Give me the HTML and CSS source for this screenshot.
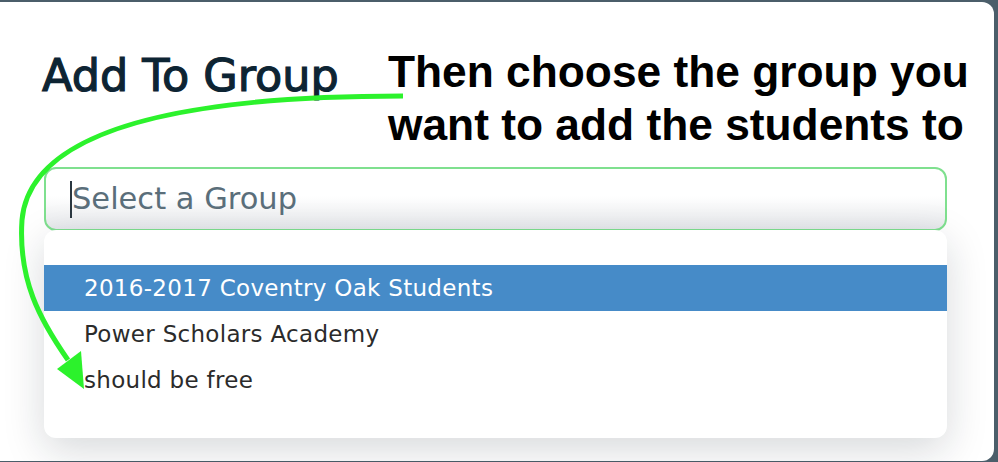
FILE: index.html
```html
<!DOCTYPE html>
<html>
<head>
<meta charset="utf-8">
<link rel="stylesheet" href="styles.css">
</head>
<body>
<div class="modal">
  <h1 class="title">Add To Group</h1>
  <div class="select">
    <span class="caret"></span><span class="placeholder">Select a Group</span>
  </div>
  <ul class="menu">
    <li class="item active">2016-2017 Coventry Oak Students</li>
    <li class="item">Power Scholars Academy</li>
    <li class="item">should be free</li>
  </ul>
</div>
<div class="note">Then choose the group you<br>want to add the students to</div>
<svg class="arrow" width="998" height="462" viewBox="0 0 998 462">
  <path d="M403 96 C 180 96, 30 130, 22 220 C 18 280, 40 320, 68 360" fill="none" stroke="#2cf22c" stroke-width="5" stroke-linecap="butt"/>
  <polygon points="57,369 81,351 84,389" fill="#2cf22c"/>
</svg>
</body>
</html>
```
FILE: styles.css
```css
html, body {
  margin: 0;
  padding: 0;
}
body {
  background: #4b5e6a;
  width: 998px;
  height: 462px;
  overflow: hidden;
  position: relative;
  font-family: "DejaVu Sans", "Open Sans", sans-serif;
}
.modal {
  margin: 2px 0 0 -20px;
  width: 1014px;
  height: 459px;
  background: #fff;
  border-radius: 12px;
  box-sizing: border-box;
  padding: 49px 0 0 64px;
}
.title {
  margin: 0 0 0 -2px;
  font-size: 44.5px;
  line-height: 50px;
  font-weight: 400;
  -webkit-text-stroke: 1.2px #0d2433;
  color: #0d2433;
}
.select {
  margin-top: 66px;
  width: 903px;
  height: 64px;
  box-sizing: border-box;
  border: 2px solid #7fe08f;
  border-radius: 12px;
  background: linear-gradient(#ffffff 45%, #e7e9ec);
  display: flex;
  align-items: center;
  padding-left: 24px;
}
.caret {
  width: 2px;
  height: 37px;
  background: #2a3740;
}
.placeholder {
  font-size: 30.5px;
  color: #5a6e7a;
  line-height: 40px;
}
.menu {
  list-style: none;
  margin: -1px 0 0 0;
  padding: 35px 0;
  width: 903px;
  box-sizing: border-box;
  background: #fff;
  border-radius: 12px;
  box-shadow: 0 12px 40px rgba(20, 30, 40, 0.17);
}
.item {
  height: 46px;
  line-height: 46px;
  padding-left: 40px;
  font-size: 23px;
  letter-spacing: 0.3px;
  color: #2b2b2b;
}
.item.active {
  background: #468bc8;
  color: #fff;
}
.note {
  position: absolute;
  left: 388px;
  top: 45px;
  font-family: "Liberation Sans", Arial, sans-serif;
  font-weight: bold;
  font-size: 44.3px;
  line-height: 53px;
  color: #000;
  white-space: nowrap;
}
.arrow {
  position: absolute;
  left: 0;
  top: 0;
  pointer-events: none;
}
```
